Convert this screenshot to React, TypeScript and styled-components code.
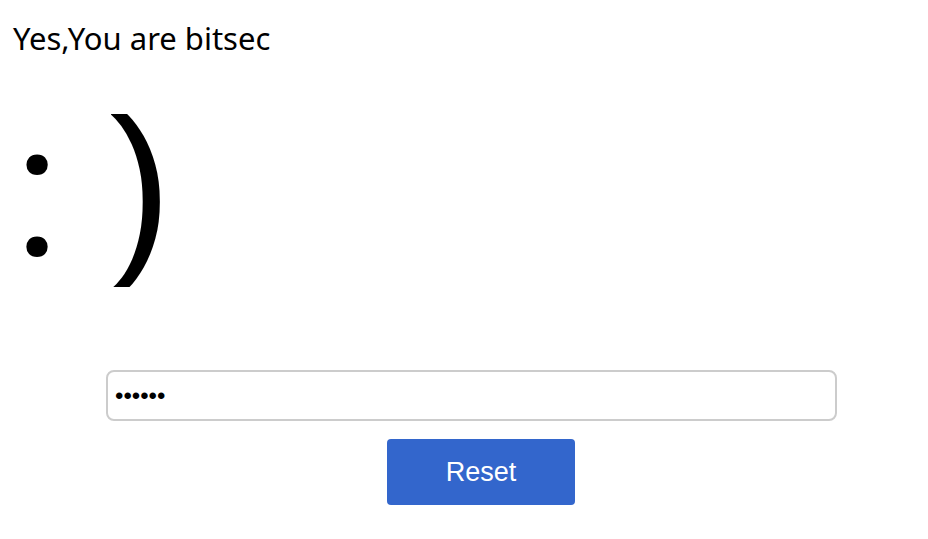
import React from "react";
import styled, { createGlobalStyle } from "styled-components";

const Global = createGlobalStyle`
  html, body { margin: 0; padding: 0; background: #fff; }
  body { font-family: "Noto Sans", "Open Sans", sans-serif; color: #000; }
`;

const Page = styled.div`
  width: 928px;
  height: 539px;
  overflow: hidden;
  display: flex;
  flex-direction: column;
`;

const Title = styled.h2`
  margin: 0;
  padding: 17px 0 0 13px;
  font-family: "Noto Sans", sans-serif;
  font-weight: 400;
  font-size: 31px;
  line-height: 42px;
`;

const SmileBox = styled.div`
  height: 173px;
  margin-top: 55px;
  overflow: hidden;
  display: flex;
  align-items: flex-start;
`;

const Smile = styled.div`
  font-family: Roboto, sans-serif;
  font-size: 190px;
  line-height: 155px;
  padding-left: 14px;
  white-space: pre;
`;

const Form = styled.div`
  margin-top: 83px;
  display: flex;
  flex-direction: column;
  align-items: flex-start;
`;

const Input = styled.input`
  box-sizing: border-box;
  margin-left: 106px;
  width: 731px;
  height: 51px;
  border: 2px solid #cccccc;
  border-radius: 8px;
  padding: 0 7px;
  font-size: 24px;
  font-family: "Liberation Sans", sans-serif;
  outline: none;
`;

const Button = styled.button`
  margin-top: 18px;
  margin-left: 387px;
  width: 188px;
  height: 66px;
  border: none;
  border-radius: 4px;
  background: #3366cc;
  color: #fff;
  font-family: "Liberation Sans", Arial, sans-serif;
  font-size: 27px;
  cursor: pointer;
`;

export default function App() {
  return (
    <Page>
      <Global />
      <Title>Yes,You are bitsec</Title>
      <SmileBox>
        <Smile>{": )"}</Smile>
      </SmileBox>
      <Form>
        <Input type="password" defaultValue="123456" readOnly />
        <Button>Reset</Button>
      </Form>
    </Page>
  );
}
